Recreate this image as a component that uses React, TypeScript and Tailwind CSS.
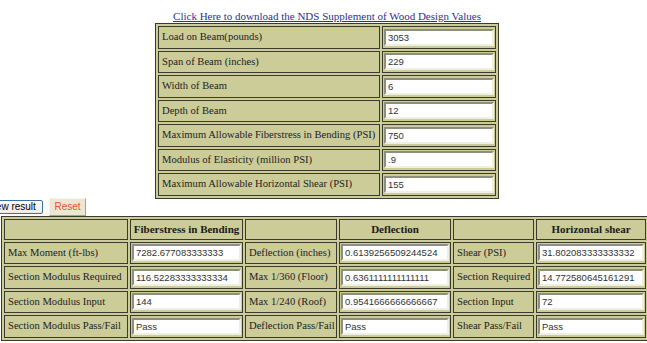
import React from 'react';

const serif = "font-['Liberation_Serif','Times_New_Roman',serif]";
const sans = "font-['Liberation_Sans',Arial,sans-serif]";

const beamInputs: [string, string][] = [
  ['Load on Beam(pounds)', '3053'],
  ['Span of Beam (inches)', '229'],
  ['Width of Beam', '6'],
  ['Depth of Beam', '12'],
  ['Maximum Allowable Fiberstress in Bending (PSI)', '750'],
  ['Modulus of Elasticity (million PSI)', '.9'],
  ['Maximum Allowable Horizontal Shear (PSI)', '155'],
];

const results: string[][] = [
  ['Max Moment (ft-lbs)', '7282.677083333333', 'Deflection (inches)', '0.6139256509244524', 'Shear (PSI)', '31.802083333333332'],
  ['Section Modulus Required', '116.52283333333334', 'Max 1/360 (Floor)', '0.6361111111111111', 'Section Required', '14.772580645161291'],
  ['Section Modulus Input', '144', 'Max 1/240 (Roof)', '0.9541666666666667', 'Section Input', '72'],
  ['Section Modulus Pass/Fail', 'Pass', 'Deflection Pass/Fail', 'Pass', 'Shear Pass/Fail', 'Pass'],
];

const Field: React.FC<{ value: string }> = ({ value }) => (
  <input
    readOnly
    value={value}
    className={`w-full min-w-0 h-[17px] bg-white px-[2px] text-[9.5px] text-[#333] ${sans} border-2 border-solid border-t-[#8e8e7c] border-l-[#8e8e7c] border-b-[#efefe4] border-r-[#efefe4] outline-none`}
  />
);

const LabelCell: React.FC<{ text: string }> = ({ text }) => (
  <div className="border border-[#3b3b2b] flex items-center px-[3px] overflow-hidden whitespace-nowrap text-[10.6px] text-[#222]">
    {text}
  </div>
);

const InputCell: React.FC<{ value: string }> = ({ value }) => (
  <div className="border border-[#3b3b2b] flex items-center px-[1px] overflow-hidden">
    <Field value={value} />
  </div>
);

const HeaderCell: React.FC<{ text?: string }> = ({ text }) => (
  <div className="border border-[#3b3b2b] flex items-center justify-center font-bold text-[11px] text-[#1a1a1a] whitespace-nowrap overflow-hidden">
    {text}
  </div>
);

export default function App() {
  return (
    <div className={`w-[647px] h-[343px] overflow-hidden bg-white ${serif}`}>
      {/* Inputs */}
      <div className="flex flex-col items-center pt-[9px] pl-[7px]">
        <a href="#" className="h-[14px] leading-[14px] text-[11px] text-[#2e2e9a] underline whitespace-nowrap">
          Click Here to download the NDS Supplement of Wood Design Values
        </a>
        <div className="border border-[#3b3b2b] bg-[#cccc99] p-[2px] grid grid-cols-[222px_114px] auto-rows-[22.5px] gap-[2px]">
          {beamInputs.map(([label, value]) => (
            <React.Fragment key={label}>
              <LabelCell text={label} />
              <InputCell value={value} />
            </React.Fragment>
          ))}
        </div>
      </div>

      {/* Buttons */}
      <div className={`flex items-center h-[17px] ${sans} text-[10px]`}>
        <button className="ml-[-20px] w-[63px] h-[14px] leading-[12px] bg-gradient-to-b from-white to-[#ecebe6] border border-[#3c6fa8] rounded-[2px] text-black">
          View result
        </button>
        <button className="ml-[6px] w-[37px] h-[18px] leading-[16px] bg-[#ebe7d3] border border-[#f8f6ea] border-r-[#a8a48c] border-b-[#a8a48c] text-[#e2532f]">
          Reset
        </button>
      </div>

      {/* Results */}
      <div className="ml-[1px] w-max border border-[#3b3b2b] bg-[#cccc99] p-[2px] grid grid-cols-[124px_113px_92px_112px_81px_110px] grid-rows-[21px_22.5px_22.5px_22.5px_22.5px] gap-[2px]">
        <HeaderCell />
        <HeaderCell text="Fiberstress in Bending" />
        <HeaderCell />
        <HeaderCell text="Deflection" />
        <HeaderCell />
        <HeaderCell text="Horizontal shear" />
        {results.map((row) => (
          <React.Fragment key={row[0]}>
            <LabelCell text={row[0]} />
            <InputCell value={row[1]} />
            <LabelCell text={row[2]} />
            <InputCell value={row[3]} />
            <LabelCell text={row[4]} />
            <InputCell value={row[5]} />
          </React.Fragment>
        ))}
      </div>
    </div>
  );
}
